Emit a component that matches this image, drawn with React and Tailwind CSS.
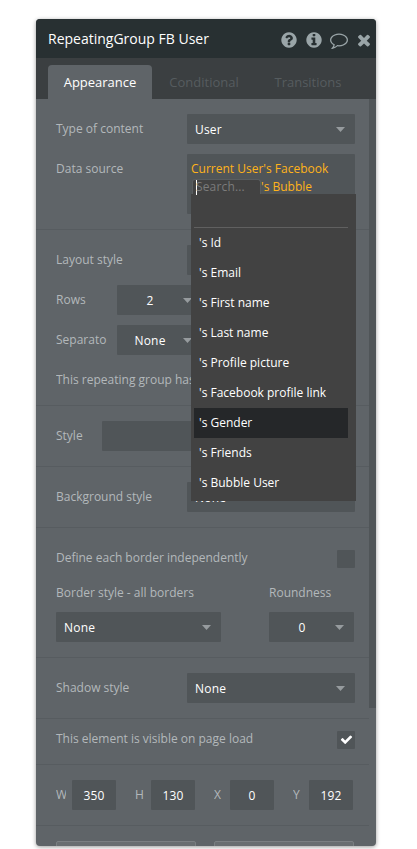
import clsx from 'clsx';

const CIRCLE =
  'm0 0q0 209-103 385.500t-279.500 279.500-385.500 103-385.500-103-279.500-279.500-103-385.500 103-385.500 279.500-279.500 385.500-103 385.500 103 279.500 279.500 103 385.500z';

const ICONS = {
  question:
    'M1024 1376v-192q0-14-9-23t-23-9h-192q-14 0-23 9t-9 23v192q0 14 9 23t23 9h192q14 0 23-9t9-23zm256-672q0-88-55.500-163t-138.500-116-170-41q-243 0-371 213-15 24 8 42l132 100q7 6 19 6 16 0 25-12 53-68 86-92 34-24 86-24 48 0 85.500 26t37.500 59q0 38-20 61t-68 45q-63 28-115.500 86.500t-52.500 125.500v36q0 14 9 23t23 9h192q14 0 23-9t9-23q0-19 21.500-49.500t54.500-49.500q32-18 49-28.500t46-35 44.500-48 28-60.500 12.500-81zM1664 896' +
    CIRCLE,
  info:
    'M1152 1376v-160q0-14-9-23t-23-9h-96v-512q0-14-9-23t-23-9h-320q-14 0-23 9t-9 23v160q0 14 9 23t23 9h96v320h-96q-14 0-23 9t-9 23v160q0 14 9 23t23 9h448q14 0 23-9t9-23zm-128-896v-160q0-14-9-23t-23-9h-192q-14 0-23 9t-9 23v160q0 14 9 23t23 9h192q14 0 23-9t9-23zM1664 896' +
    CIRCLE,
  comment:
    'M896 384q-204 0-381.500 69.500t-282 187.500-104.500 255q0 112 71.500 213.500t201.500 175.500l87 50-27 96q-24 91-70 172 152-63 275-171l43-38 57 6q69 8 130 8 204 0 381.500-69.500t282-187.500 104.500-255-104.500-255-282-187.500-381.500-69.500zm896 512q0 174-120 321.500t-326 233-450 85.500q-70 0-145-8-198 175-460 242-49 14-114 22h-5q-15 0-27-10.500t-16-27.500v-1q-3-4-.5-12t2-10 4.500-9.500l6-9 7-8.500 8-9q7-8 31-34.500t34.500-38 31-39.500 32.500-51 27-59 26-76q-157-89-247.500-220t-90.500-281q0-174 120-321.500t326-233 450-85.500 450 85.500 326 233 120 321.500z',
  close:
    'M1490 1322q0 40-28 68l-136 136q-28 28-68 28t-68-28l-294-294-294 294q-28 28-68 28t-68-28l-136-136q-28-28-28-68t28-68l294-294-294-294q-28-28-28-68t28-68l136-136q28-28 68-28t68 28l294 294 294-294q28-28 68-28t68 28l136 136q28 28 28 68t-28 68l-294 294 294 294q28 28 28 68z',
  check:
    'M1671 566q0 40-28 68l-724 724-136 136q-28 28-68 28t-68-28l-136-136-362-362q-28-28-28-68t28-68l136-136q28-28 68-28t68 28l294 295 656-657q28-28 68-28t68 28l136 136q28 28 28 68z',
};

const OPTIONS = [
  "'s Id",
  "'s Email",
  "'s First name",
  "'s Last name",
  "'s Profile picture",
  "'s Facebook profile link",
  "'s Gender",
  "'s Friends",
  "'s Bubble User",
];

const DIMENSIONS = [
  { label: 'W', value: 350 },
  { label: 'H', value: 130 },
  { label: 'X', value: 0 },
  { label: 'Y', value: 192 },
];

const Icon = ({ name, className }) => (
  <svg viewBox="0 0 1792 1792" fill="currentColor" className={clsx('shrink-0 overflow-visible', className)}>
    <path d={ICONS[name]} />
  </svg>
);

const Section = ({ children, className }) => (
  <div className={clsx('border-b border-[#575c60] pl-5 pr-3.5 py-[15px]', className)}>{children}</div>
);

const Label = ({ children, className }) => (
  <span className={clsx('whitespace-nowrap text-[#b3b8bb]', className)}>{children}</span>
);

const Select = ({ value, centered, className }) => (
  <div className={clsx('flex h-[30px] shrink-0 items-center rounded-[1px] bg-[#505558] pr-2.5 text-white', className)}>
    <span className={clsx('flex-1 pt-0.5 tracking-[0.2px]', centered ? 'text-center' : 'pl-2')}>{value}</span>
    <svg viewBox="0 0 9 5" className="mt-px h-[5px] w-[9px] fill-[#969b9e]">
      <path d="M0 0h9L4.500 5z" />
    </svg>
  </div>
);

const Checkbox = ({ checked, className }) => (
  <div className={clsx('flex size-[18px] items-center justify-center rounded-[1px] bg-[#505558] text-white', className)}>
    {checked && <Icon name="check" className="mb-px size-[13px]" />}
  </div>
);

const OptionsMenu = () => (
  <div className="absolute left-[155px] top-40 w-[165px]">
    {/* Search box */}
    <div className="ml-px flex h-[15px] w-[69px] items-start rounded-t-[3px] border border-b-0 border-[#5a5e60] bg-[#424242] pl-[3px]">
      <span className="h-[15px] w-px shrink-0 bg-white"></span>
      <span className="-ml-px -mt-px leading-4 tracking-[0.15px] text-[#7b7b7b]">Search...</span>
    </div>

    {/* Options */}
    <div className="bg-[#424242] pb-[3px] pl-[3px] pr-2 text-white">
      <div className="h-[34px] border-b border-[#606060]"></div>
      {OPTIONS.map((option) => (
        <div
          key={option}
          className={clsx('h-[30px] pl-[5px] leading-[30px]', option === "'s Gender" && 'bg-[#252729]')}
        >
          {option}
        </div>
      ))}
    </div>
  </div>
);

export default function App() {
  return (
    <div className="h-[849px] w-[417px] overflow-hidden bg-white pl-9 pt-[19px] font-['Open_Sans',sans-serif] text-xs leading-5">
      <div className="relative flex h-[827px] w-[340px] flex-col overflow-hidden rounded bg-[#5f6468] shadow-[0_1px_4px_rgba(0,0,0,0.4)]">
        {/* Header */}
        <div className="flex h-[39px] shrink-0 items-center justify-between bg-[#283032] pl-3 pr-[3.5px] text-white">
          <span className="text-sm">RepeatingGroup FB User</span>
          <div className="flex items-center gap-[7px] pt-0.5 text-[#9aa5a8]">
            <Icon name="question" className="size-[18px]" />
            <Icon name="info" className="size-[18px]" />
            <Icon name="comment" className="size-[18px]" />
            <Icon name="close" className="size-[18px]" />
          </div>
        </div>

        {/* Tabs */}
        <div className="flex h-[41px] shrink-0 items-end bg-[#3b3f41] pl-3 text-[13px] leading-[34px] text-[#565c5f]">
          <div className="h-[34px] w-[104px] rounded-t bg-[#5f6468] text-center font-medium text-white">Appearance</div>
          <div className="h-[34px] w-[104px] text-center">Conditional</div>
          <div className="h-[34px] w-[104px] text-center">Transitions</div>
        </div>

        <div className="flex min-h-0 flex-1">
          <div className="w-[333px] shrink-0">
            {/* Content */}
            <Section className="flex flex-col gap-2.5">
              <div className="flex items-center justify-between">
                <Label>Type of content</Label>
                <Select value="User" className="w-[168px]" />
              </div>
              <div className="flex items-start justify-between">
                <Label className="pt-[5px]">Data source</Label>
                <div className="h-[60px] w-[168px] rounded-[1px] bg-[#505558] pl-1 pt-1.5 leading-[18px] text-[#ffb31a]">
                  <div className="whitespace-nowrap">Current User's Facebook</div>
                  <div className="pl-[70px]">'s Bubble</div>
                </div>
              </div>
            </Section>

            {/* Layout */}
            <Section className="flex flex-col gap-2.5 pb-2.5">
              <div className="flex items-center justify-between">
                <Label>Layout style</Label>
                <Select value="" className="w-[168px]" />
              </div>
              <div className="flex items-center">
                <Label className="w-[61px]">Rows</Label>
                <Select value="2" centered className="w-[85px]" />
              </div>
              <div className="flex items-center">
                <Label className="w-[61px]">Separato</Label>
                <Select value="None" centered className="w-[85px]" />
              </div>
              <Label className="block h-[30px] overflow-hidden leading-[30px]">This repeating group has</Label>
            </Section>

            <Section className="flex items-center justify-between">
              <Label>Style</Label>
              <Select value="" className="w-[253px]" />
            </Section>

            <Section className="flex items-center justify-between">
              <Label>Background style</Label>
              <Select value="None" className="w-[168px]" />
            </Section>

            {/* Borders */}
            <Section>
              <div className="flex h-8 items-center justify-between">
                <Label className="pb-0.5">Define each border independently</Label>
                <Checkbox />
              </div>
              <div className="mt-2 flex items-start justify-between pr-px">
                <div>
                  <Label className="block h-[29px]">Border style - all borders</Label>
                  <Select value="None" className="w-[165px]" />
                </div>
                <div>
                  <Label className="block h-[29px]">Roundness</Label>
                  <Select value="0" centered className="w-[85px]" />
                </div>
              </div>
            </Section>

            <Section className="flex items-center justify-between">
              <Label>Shadow style</Label>
              <Select value="None" className="w-[168px]" />
            </Section>

            <Section className="flex h-[46px] items-start justify-between pb-0 pt-2.5">
              <Label>This element is visible on page load</Label>
              <Checkbox checked className="mt-0.5" />
            </Section>

            {/* Position and size */}
            <Section className="flex gap-[19px]">
              {DIMENSIONS.map(({ label, value }) => (
                <div key={label} className="flex w-[60px] shrink-0 items-center">
                  <Label className="mr-1.5 w-2.5 overflow-hidden">{label}</Label>
                  <div className="h-[30px] w-11 rounded-[1px] bg-[#505558] text-center leading-8 tracking-[0.2px] text-white">
                    {value}
                  </div>
                </div>
              ))}
            </Section>

            <div className="flex gap-[18px] pl-5 pt-[15px]">
              <div className="h-[30px] w-[140px] rounded-[2px] border border-[#7a7f82] bg-[#696e71]"></div>
              <div className="h-[30px] w-[140px] rounded-[2px] border border-[#7a7f82] bg-[#696e71]"></div>
            </div>
          </div>

          {/* Scrollbar */}
          <div className="h-[609px] w-[7px] bg-[#505558]"></div>
        </div>

        <OptionsMenu />
      </div>
    </div>
  );
}
